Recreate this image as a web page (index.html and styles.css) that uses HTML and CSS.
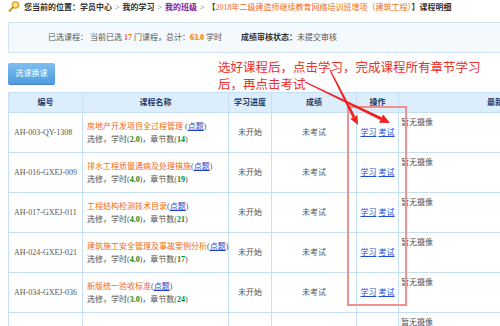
FILE: index.html
```html
<!DOCTYPE html>
<html lang="zh-CN">
  <head>
    <meta charset="UTF-8" />
    <meta name="viewport" content="width=device-width, initial-scale=1.0" />
    <title>课程明细</title>
    <link rel="stylesheet" href="styles.css">
  </head>
  <body>
    <div class="page">
      <div class="crumbs">
        <svg class="crumb-icon" width="12" height="11" viewBox="0 0 12 11">
          <circle cx="7.5" cy="4" r="3.2" fill="#fbe39a" stroke="#d99a1e" stroke-width="1.2" />
          <path d="M5.2 6.2 L1.5 9.8" stroke="#c98a16" stroke-width="1.8" stroke-linecap="round" />
        </svg>
        <span class="crumb-label">您当前的位置：</span><a class="crumb-link">学员中心</a>
        <span class="sep">&gt;</span>
        <a class="crumb-link">我的学习</a>
        <span class="sep">&gt;</span>
        <a class="crumb-link visited">我的班级</a>
        <span class="sep">&gt;</span>
        <b>【</b><span class="class-name">2018年二级建造师继续教育网络培训班增项（建筑工程）</span><b>】课程明细</b>
      </div>

      <div class="summary">
        已选课程：&nbsp;当前已选 <span class="num">17</span> 门课程，总计：<span class="num">63.0</span> 学时
        <span class="status-label">成绩审核状态：</span>未提交审核
      </div>

      <a class="btn">选课换课</a>

      <table class="courses">
        <colgroup>
          <col class="c-id" />
          <col class="c-name" />
          <col class="c-progress" />
          <col class="c-score" />
          <col class="c-ops" />
          <col />
        </colgroup>
        <tr>
          <th>编号</th>
          <th>课程名称</th>
          <th>学习进度</th>
          <th>成绩</th>
          <th>操作</th>
          <th>最新摄像</th>
        </tr>
        <tr>
          <td class="code">AH-003-QY-1308</td>
          <td class="name">
            <div class="line"><span class="title">房地产开发项目全过程管理</span> (<a class="hint">点题</a>)</div>
            <div class="line meta">选修，学时(<b>2.0</b>)，章节数(<b>14</b>)</div>
          </td>
          <td class="mid">未开始</td>
          <td class="mid">未考试</td>
          <td class="ops"><a class="op">学习</a> <a class="op">考试</a></td>
          <td class="cam">暂无摄像</td>
        </tr>
        <tr>
          <td class="code">AH-016-GXEJ-009</td>
          <td class="name">
            <div class="line"><span class="title">排水工程质量通病及处理措施</span>(<a class="hint">点题</a>)</div>
            <div class="line meta">选修，学时(<b>4.0</b>)，章节数(<b>19</b>)</div>
          </td>
          <td class="mid">未开始</td>
          <td class="mid">未考试</td>
          <td class="ops"><a class="op">学习</a> <a class="op">考试</a></td>
          <td class="cam">暂无摄像</td>
        </tr>
        <tr>
          <td class="code">AH-017-GXEJ-011</td>
          <td class="name">
            <div class="line"><span class="title">工程结构检测技术目录</span>(<a class="hint">点题</a>)</div>
            <div class="line meta">选修，学时(<b>4.0</b>)，章节数(<b>21</b>)</div>
          </td>
          <td class="mid">未开始</td>
          <td class="mid">未考试</td>
          <td class="ops"><a class="op">学习</a> <a class="op">考试</a></td>
          <td class="cam">暂无摄像</td>
        </tr>
        <tr>
          <td class="code">AH-024-GXEJ-021</td>
          <td class="name">
            <div class="line"><span class="title">建筑施工安全管理及事故案例分析</span>(<a class="hint">点题</a>)</div>
            <div class="line meta">选修，学时(<b>4.0</b>)，章节数(<b>17</b>)</div>
          </td>
          <td class="mid">未开始</td>
          <td class="mid">未考试</td>
          <td class="ops"><a class="op">学习</a> <a class="op">考试</a></td>
          <td class="cam">暂无摄像</td>
        </tr>
        <tr>
          <td class="code">AH-034-GXEJ-036</td>
          <td class="name">
            <div class="line"><span class="title">新版统一验收标准</span>(<a class="hint">点题</a>)</div>
            <div class="line meta">选修，学时(<b>3.0</b>)，章节数(<b>24</b>)</div>
          </td>
          <td class="mid">未开始</td>
          <td class="mid">未考试</td>
          <td class="ops"><a class="op">学习</a> <a class="op">考试</a></td>
          <td class="cam">暂无摄像</td>
        </tr>
        <tr class="tall">
          <td class="code">AH-041-GXEJ-044</td>
          <td class="name">
            <div class="line"><span class="title">建设工程项目管理</span>(<a class="hint">点题</a>)</div>
            <div class="line meta">选修，学时(<b>4.0</b>)，章节数(<b>16</b>)</div>
          </td>
          <td class="mid">未开始</td>
          <td class="mid">未考试</td>
          <td class="ops"><a class="op">学习</a> <a class="op">考试</a></td>
          <td class="cam">暂无摄像</td>
        </tr>
      </table>
    </div>

    <!-- annotation drawn over the page -->
    <div class="note">选好课程后，点击学习，完成课程所有章节学习<br />后，再点击考试</div>
    <div class="mark-box"></div>
    <svg class="arrows" width="500" height="326" viewBox="0 0 500 326">
      <polygon points="329.5,70.2 330.5,69.8 355.2,116.3 352.6,117.7" fill="#f02222" />
      <polygon points="358,125 350.3,118.8 357.5,115.2" fill="#f02222" />
      <polygon points="304.8,82.5 305.2,81.5 381.7,117.2 380.3,120.1" fill="#f02222" />
      <polygon points="390,123 379,122.7 383,114.6" fill="#f02222" />
    </svg>
  </body>
</html>
```

FILE: styles.css
```css
html {
  overflow: hidden;
}

body {
  margin: 0;
  padding: 0;
  background-color: #fff;
  font-family: "Liberation Serif", "Noto Sans CJK SC", serif;
  font-size: 8px;
  color: #444;
}

.page {
  width: 600px;
  padding: 0 8px;
}

a {
  cursor: pointer;
}

.crumbs {
  height: 16px;
  line-height: 16px;
  color: #333;
  white-space: nowrap;
}

.crumb-icon {
  vertical-align: -2px;
  margin-right: 2px;
}

.crumb-label,
.crumb-link {
  color: #333;
  font-weight: bold;
}

.crumb-link.visited {
  color: #8a1a9a;
}

.sep {
  margin: 0 1px;
  color: #666;
}

.class-name {
  color: #f26a10;
}

.summary {
  margin-top: 6px;
  height: 29px;
  line-height: 29px;
  padding-left: 39px;
  border: 1px solid #cfe3f5;
  border-right: none;
  background-color: #f4f9fe;
  color: #555;
  white-space: nowrap;
}

.summary .num {
  color: #f26a10;
  font-weight: bold;
}

.status-label {
  margin-left: 17px;
  color: #333;
  font-weight: bold;
}

.btn {
  display: block;
  width: 47px;
  height: 22px;
  margin-top: 10px;
  line-height: 22px;
  text-align: center;
  color: #fff;
  background: linear-gradient(#7fbef0, #4f9be0);
  border-bottom: 1px solid #3f86c8;
  box-sizing: border-box;
  border-radius: 2px;
}

.courses {
  width: 600px;
  margin-top: 7px;
  border-collapse: collapse;
  table-layout: fixed;
}

.c-id {
  width: 74px;
}

.c-name {
  width: 146px;
}

.c-progress {
  width: 43px;
}

.c-score {
  width: 85px;
}

.c-ops {
  width: 42px;
}

.courses th,
.courses td {
  border: 1px solid #c4dff6;
  padding: 0 4px;
  line-height: 13px;
  white-space: nowrap;
}

.courses th {
  height: 19px;
  background-color: #dcedfc;
  color: #1c3a6e;
  font-weight: bold;
}

.courses td {
  height: 39px;
  color: #555;
}

.courses .tall td {
  height: 64px;
}

.courses .code {
  padding-left: 5px;
}

.line {
  height: 13px;
  overflow: visible;
}

.title {
  color: #f26a10;
}

.hint {
  color: #1f3fc4;
  text-decoration: underline;
}

.meta b {
  color: #0a8a1a;
}

.mid {
  text-align: center;
}

.courses .ops {
  padding: 0;
  text-align: center;
}

.op {
  color: #1e4fd8;
  text-decoration: underline;
}

.courses .cam {
  height: 36px;
  vertical-align: top;
  padding: 3px 2px 0;
}

.courses .tall .cam {
  height: 61px;
}

.note {
  position: absolute;
  left: 218px;
  top: 59px;
  font-family: "Noto Sans CJK SC", sans-serif;
  font-size: 12.5px;
  line-height: 16.5px;
  color: #e8302c;
  white-space: nowrap;
}

.mark-box {
  position: absolute;
  left: 347px;
  top: 106px;
  width: 56px;
  height: 196px;
  border: 2px solid #f09090;
}

.arrows {
  position: absolute;
  left: 0;
  top: 0;
  pointer-events: none;
}
```
